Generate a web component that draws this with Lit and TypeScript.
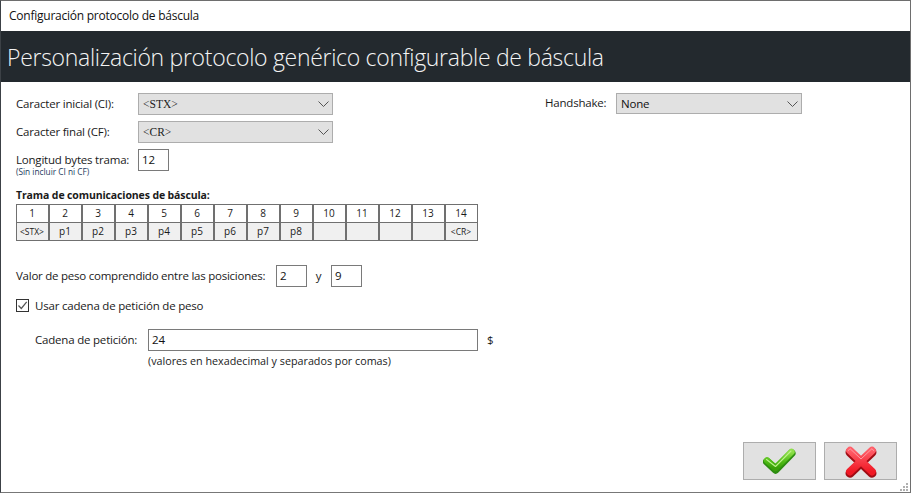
import { LitElement, html, css } from "lit";
import { customElement } from "lit/decorators.js";

const chevron = html`<svg class="chev" width="11" height="6" viewBox="0 0 11 6"><path d="M.5.5 5.5 5.5 10.5.5" fill="none" stroke="#555" stroke-width="1"/></svg>`;

const top = ["1","2","3","4","5","6","7","8","9","10","11","12","13","14"];
const bottom = ["<STX>","p1","p2","p3","p4","p5","p6","p7","p8","","","","","<CR>"];

@customElement("app-root")
export class AppRoot extends LitElement {
  static styles = css`
    :host { display: block; width: 911px; height: 493px; overflow: hidden; background: #fff; font-family: "Open Sans", "Noto Sans", sans-serif; font-size: 11.5px; letter-spacing: -0.2px; color: #1a1a1a; }
    .win { position: relative; box-sizing: border-box; width: 911px; height: 493px; border-left: 1px solid #3c4146; border-right: 1px solid #6e6e6e; border-top: 1px solid #6e6e6e; border-bottom: 1px solid #777; display: flex; flex-direction: column; }
    .title { height: 30px; flex: none; box-sizing: border-box; padding: 0 0 1px 8px; display: flex; align-items: center; font-size: 12px; letter-spacing: -0.24px; color: #111; }
    .header { height: 51px; flex: none; box-sizing: border-box; background: #23292e; color: #f4f4f4; font-size: 23px; letter-spacing: -0.3px; font-weight: 300; padding: 0 0 0 6px; display: flex; align-items: center; white-space: nowrap; }
    .body { flex: 1; box-sizing: border-box; padding: 11px 0 0 15px; display: flex; flex-direction: column; position: relative; }
    .cols { display: flex; }
    .left { width: 529px; flex: none; }
    .row { display: flex; align-items: center; white-space: nowrap; }
    .row > span { padding-bottom: 2px; }
    .top-align { align-items: flex-start; }
    .lbl1 { width: 122px; flex: none; }
    .select { box-sizing: border-box; height: 22px; background: #e1e1e1; border: 1px solid #adadad; display: flex; align-items: center; justify-content: space-between; padding: 0 3px 0 4px; }
    .mono { font-family: "Liberation Serif", serif; font-size: 11.5px; letter-spacing: 0; color: #222; }
    .s1 { width: 195px; }
    .s2 { width: 186px; height: 21px; color: #111; }
    .mt6 { margin-top: 6px; }
    .input { box-sizing: border-box; height: 22px; width: 31px; border: 1px solid #7a7a7a; background: #fff; padding: 0 3px 2px; display: flex; align-items: center; color: #111; }
    .small { font-size: 8.3px; letter-spacing: 0; color: #1c3a5c; line-height: 10px; margin-top: -4px; height: 10px; }
    .hs { width: 71px; flex: none; line-height: 20px; }
    .bold { font-weight: 700; font-size: 10.5px; letter-spacing: -0.12px; margin-top: 11px; line-height: 14px; }
    .grid { display: grid; grid-template-columns: repeat(14, 33px); width: 462px; border-top: 1px solid #707070; margin-top: 2px; box-sizing: border-box; }
    .cell { box-sizing: border-box; height: 18px; border-right: 1px solid #707070; border-bottom: 1px solid #707070; box-shadow: inset 1px 0 0 #707070; display: flex; align-items: center; justify-content: center; font-size: 10px; letter-spacing: 0; padding-bottom: 1px; }
    .cell.b { background: #f0f0f0; }
    .cell.nar { font-size: 8.5px; }
    .valor { margin-top: 24px; }
    .valor .txt { width: 260px; flex: none; letter-spacing: -0.24px; }
    .y { width: 24px; flex: none; text-align: center; padding-right: 1px; box-sizing: border-box; }
    .chk { display: flex; align-items: center; margin-top: 12px; height: 13px; }
    .box { width: 13px; height: 13px; box-sizing: border-box; border: 1px solid #333; flex: none; margin-right: 6px; display: flex; }
    .cad { margin: 17px 0 0 19px; }
    .cad .lab { width: 113px; flex: none; }
    .cad .input { width: 330px; }
    .dollar { margin-left: 9px; }
    .hint { margin: 3px 0 0 132px; line-height: 15px; font-size: 10.75px; letter-spacing: 0; }
    .btns { position: absolute; right: 13px; bottom: 12px; display: flex; gap: 8px; }
    .btn { box-sizing: border-box; width: 73px; height: 38px; background: #e1e1e1; border: 1px solid #adadad; display: flex; align-items: center; justify-content: center; }
    .grip { position: absolute; right: 2px; bottom: 1px; }
  `;

  render() {
    return html`<div class="win">
      <div class="title">Configuración protocolo de báscula</div>
      <div class="header">Personalización protocolo genérico configurable de báscula</div>
      <div class="body">
        <div class="cols">
          <div class="left">
            <div class="row"><span class="lbl1">Caracter inicial (CI):</span><div class="select s1 mono"><span>&lt;STX&gt;</span>${chevron}</div></div>
            <div class="row mt6"><span class="lbl1">Caracter final (CF):</span><div class="select s1 mono"><span>&lt;CR&gt;</span>${chevron}</div></div>
            <div class="row mt6"><span class="lbl1">Longitud bytes trama:</span><div class="input">12</div></div>
            <div class="small">(Sin incluir CI ni CF)</div>
          </div>
          <div class="row top-align">
            <span class="hs">Handshake:</span><div class="select s2"><span>None</span>${chevron}</div>
          </div>
        </div>
        <div class="bold">Trama de comunicaciones de báscula:</div>
        <div class="grid">
          ${top.map((t) => html`<div class="cell">${t}</div>`)}
          ${bottom.map((t) => html`<div class="cell b ${t.length > 2 ? "nar" : ""}">${t}</div>`)}
        </div>
        <div class="row valor"><span class="txt">Valor de peso comprendido entre las posiciones:</span><div class="input">2</div><span class="y">y</span><div class="input">9</div></div>
        <div class="chk"><span class="box"><svg width="11" height="11" viewBox="0 0 11 11"><path d="M1.5 5.5 4.3 8.5 9.7 1.8" fill="none" stroke="#555" stroke-width="1.2"/></svg></span>Usar cadena de petición de peso</div>
        <div class="row cad"><span class="lab">Cadena de petición:</span><div class="input">24</div><span class="dollar">$</span></div>
        <div class="hint">(valores en hexadecimal y separados por comas)</div>
        <div class="btns">
          <div class="btn"><svg width="33" height="26" viewBox="0 0 33 26">
            <defs><linearGradient id="g" x1="0" y1="0" x2="0" y2="1"><stop offset="0" stop-color="#8fe04a"/><stop offset=".6" stop-color="#4fbb16"/><stop offset="1" stop-color="#39a008"/></linearGradient></defs>
            <path d="M4 13 12.5 21 28.5 4.5" fill="none" stroke="#2c8c10" stroke-width="8" stroke-linecap="round" stroke-linejoin="round" transform="translate(0 .7)"/>
            <path d="M4 12.5 12.5 20 28.5 4" fill="none" stroke="url(#g)" stroke-width="6.4" stroke-linecap="round" stroke-linejoin="round"/>
            <path d="M3.5 11.5 12.5 18.5 28 3" fill="none" stroke="#bdf28c" stroke-width="1.1" stroke-linecap="round" stroke-linejoin="round"/>
          </svg></div>
          <div class="btn"><svg width="32" height="33" viewBox="0 0 32 33">
            <defs><linearGradient id="r" x1="0" y1="0" x2="0" y2="1"><stop offset="0" stop-color="#ff5e68"/><stop offset="1" stop-color="#f01824"/></linearGradient></defs>
            <path d="M5 6 27 27M27 6 5 27" fill="none" stroke="#a00c14" stroke-width="9" stroke-linecap="round" transform="translate(0 1.2)"/>
            <path d="M5 5.6 27 26.6M27 5.6 5 26.6" fill="none" stroke="url(#r)" stroke-width="7.6" stroke-linecap="round"/>
            <path d="M3.5 5.5 5 3.6 16 14 27 3.6 28.5 5.5" fill="none" stroke="#ff9aa2" stroke-width="1" stroke-linecap="round" stroke-linejoin="round"/>
          </svg></div>
        </div>
        <svg class="grip" width="8" height="8" viewBox="0 0 8 8" fill="#b0b0b0"><rect x="6" y="0" width="2" height="2"/><rect x="3" y="3" width="2" height="2"/><rect x="6" y="3" width="2" height="2"/><rect x="0" y="6" width="2" height="2"/><rect x="3" y="6" width="2" height="2"/><rect x="6" y="6" width="2" height="2"/></svg>
      </div>
    </div>`;
  }
}
